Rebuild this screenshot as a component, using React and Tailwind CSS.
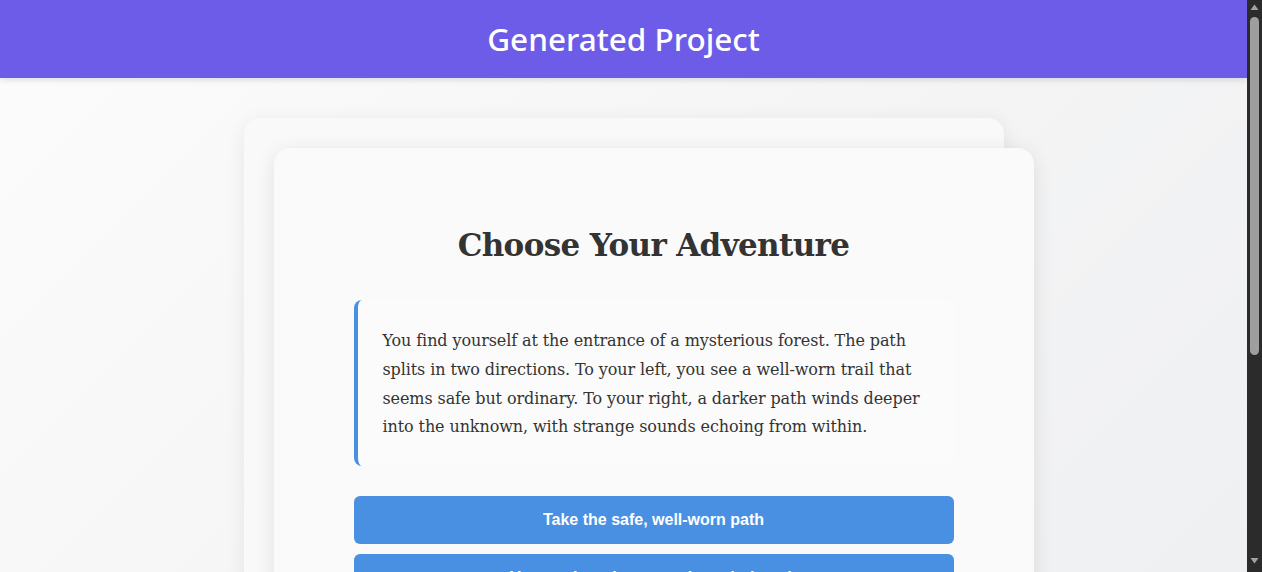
function FakeScrollbar() {
    return (
        <div className="w-[15px] h-screen bg-[#2b2b2b] flex flex-col items-center shrink-0">
            <svg width="9" height="7" viewBox="0 0 9 7" className="mt-[4px]">
                <path d="M4.5 0.5 L8.5 6 L0.5 6 Z" fill="#a3a3a3" />
            </svg>
            <div className="mt-[6px] w-[9px] h-[338px] rounded-full bg-[#9e9e9e]" />
            <div className="flex-1" />
            <svg width="9" height="7" viewBox="0 0 9 7" className="mb-[8px]">
                <path d="M0.5 1 L8.5 1 L4.5 6.5 Z" fill="#a3a3a3" />
            </svg>
        </div>
    );
}

export default function App() {
    const choices = [
        "Take the safe, well-worn path",
        "Venture into the mysterious dark path",
    ];

    return (
        <div className="flex h-screen overflow-hidden">
            <div className="flex-1 h-screen overflow-hidden">
                <div className="min-h-[917px] text-[#333] bg-[linear-gradient(135deg,#fdfcfd_0%,#f4f4f5_50%,#eceef0_100%)] font-['Liberation_Sans',Arial,sans-serif]">
                    <header className="h-[78px] bg-[#6c5ce7] flex items-center justify-center shadow-[0_2px_6px_rgba(0,0,0,0.12)]">
                        <h1 className="text-white text-[31.5px] font-medium font-['Noto_Sans',Inter,sans-serif]">
                            Generated Project
                        </h1>
                    </header>

                    <main className="flex justify-center pt-10 pb-10">
                        <div className="w-[760px] rounded-2xl bg-[#f9f9f9] shadow-[0_4px_20px_rgba(0,0,0,0.08)]">
                            <div className="ml-[30px] -mr-[30px] mt-[30px] rounded-2xl bg-[#fafafa] shadow-[0_4px_20px_rgba(0,0,0,0.10)] px-20 pt-[77px] pb-20">
                                <h2 className="text-center text-[31px] leading-[40px] font-bold text-[#333] font-['DejaVu_Serif',Georgia,serif] tracking-[-0.65px]">
                                    Choose Your Adventure
                                </h2>

                                <div className="mt-[35px] border-l-4 border-[#4a90e2] rounded-lg bg-[#fbfbfb] pl-[25px] pr-[25px] pt-[27px] pb-[24px]">
                                    <p className="text-[16px] leading-[28.8px] text-[#333] font-['DejaVu_Serif',Georgia,serif] tracking-[-0.1px]">
                                        You find yourself at the entrance of a mysterious forest. The path splits in two directions. To your left, you see a well-worn trail that seems safe but ordinary. To your right, a darker path winds deeper into the unknown, with strange sounds echoing from within.
                                    </p>
                                </div>

                                <div className="mt-[30px] flex flex-col gap-[10px]">
                                    {choices.map((c) => (
                                        <button
                                            key={c}
                                            className="h-12 w-full rounded-md bg-[#4a90e2] text-white text-base font-bold"
                                        >
                                            {c}
                                        </button>
                                    ))}
                                </div>
                            </div>
                        </div>
                    </main>
                </div>
            </div>
            <FakeScrollbar />
        </div>
    );
}
